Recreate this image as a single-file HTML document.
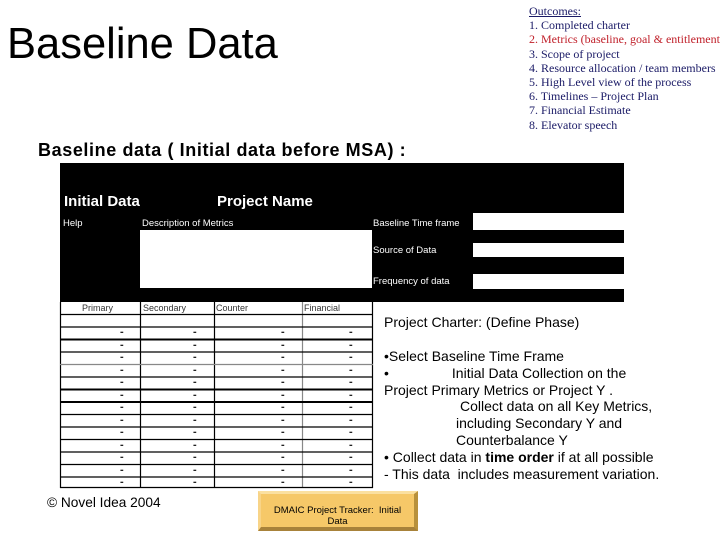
<!DOCTYPE html>
<html><head><style>
*{margin:0;padding:0;box-sizing:border-box}
body{width:720px;height:540px;background:#fff;position:relative;overflow:hidden;font-family:"Liberation Sans",sans-serif}
.a{position:absolute;white-space:nowrap}
.out{font-family:"Liberation Serif",serif;font-size:12px;color:#1a1a66;line-height:14.2px}
.w{position:absolute;background:#fff}
.lbl{position:absolute;color:#fff;font-size:9.5px}
.r{font-size:14px;color:#000;line-height:16.8px}
.d{position:absolute;font-size:9px;color:#333}
.dd{position:absolute;top:326px;font-size:11px;line-height:12.5px;color:#222;font-weight:bold}
</style></head><body>
<div class="a" style="left:7px;top:20px;font-size:43.5px;">Baseline Data</div>
<div class="a out" style="left:529px;top:4px;">
<span style="text-decoration:underline">Outcomes:</span><br>1. Completed charter<br><span style="color:#c0202a">2. Metrics (baseline, goal &amp; entitlement</span><br>3. Scope of project<br>4. Resource allocation / team members<br>5. High Level view of the process<br>6. Timelines – Project Plan<br>7. Financial Estimate<br>8. Elevator speech</div>
<div class="a" style="left:38px;top:140px;font-size:18px;letter-spacing:0.6px;font-weight:bold;">Baseline data ( Initial data before MSA) :</div>

<div style="position:absolute;left:60px;top:163px;width:564px;height:139px;background:#000"></div>
<div class="a" style="left:64px;top:193px;color:#fff;font-weight:bold;font-size:15px">Initial Data</div>
<div class="a" style="left:217px;top:193px;color:#fff;font-weight:bold;font-size:15px">Project Name</div>
<div class="lbl" style="left:63px;top:218px">Help</div>
<div class="lbl" style="left:142px;top:218px">Description of Metrics</div>
<div class="w" style="left:140px;top:230px;width:232px;height:58px"></div>
<div class="lbl" style="left:373px;top:218px">Baseline Time frame</div>
<div class="lbl" style="left:373px;top:245px">Source of Data</div>
<div class="lbl" style="left:373px;top:276px">Frequency of data</div>
<div class="w" style="left:473px;top:213px;width:151px;height:17px"></div>
<div class="w" style="left:473px;top:243px;width:151px;height:14px"></div>
<div class="w" style="left:473px;top:274px;width:151px;height:15px"></div>

<svg style="position:absolute;left:0;top:0" width="720" height="540">
<g stroke="#000" stroke-width="1.2">
<line x1="60.5" y1="302" x2="60.5" y2="488"/>
<line x1="140.5" y1="302" x2="140.5" y2="488"/>
<line x1="214.5" y1="302" x2="214.5" y2="488"/>
<line x1="302.5" y1="302" x2="302.5" y2="488" stroke="#888"/>
<line x1="372.5" y1="302" x2="372.5" y2="488"/>
<line x1="60" y1="314.5" x2="373" y2="314.5"/>
<line x1="60" y1="327" x2="373" y2="327"/>
<line x1="60" y1="339.5" x2="373" y2="339.5" stroke-width="2"/>
<line x1="60" y1="352" x2="373" y2="352"/>
<line x1="60" y1="364.5" x2="373" y2="364.5" stroke="#888"/>
<line x1="60" y1="377" x2="373" y2="377"/>
<line x1="60" y1="389.5" x2="373" y2="389.5" stroke-width="2"/>
<line x1="60" y1="402" x2="373" y2="402" stroke-width="2"/>
<line x1="60" y1="414.5" x2="373" y2="414.5"/>
<line x1="60" y1="427" x2="373" y2="427"/>
<line x1="60" y1="439.5" x2="373" y2="439.5"/>
<line x1="60" y1="452" x2="373" y2="452"/>
<line x1="60" y1="464.5" x2="373" y2="464.5"/>
<line x1="60" y1="477" x2="373" y2="477"/>
<line x1="60" y1="487.5" x2="373" y2="487.5"/>
</g>
</svg>
<div class="d" style="left:82px;top:303px">Primary</div>
<div class="d" style="left:143px;top:303px">Secondary</div>
<div class="d" style="left:216px;top:303px">Counter</div>
<div class="d" style="left:304px;top:303px">Financial</div>
<div class="dd" style="left:120px">-<br>-<br>-<br>-<br>-<br>-<br>-<br>-<br>-<br>-<br>-<br>-<br>-</div>
<div class="dd" style="left:193px">-<br>-<br>-<br>-<br>-<br>-<br>-<br>-<br>-<br>-<br>-<br>-<br>-</div>
<div class="dd" style="left:281px">-<br>-<br>-<br>-<br>-<br>-<br>-<br>-<br>-<br>-<br>-<br>-<br>-</div>
<div class="dd" style="left:349px">-<br>-<br>-<br>-<br>-<br>-<br>-<br>-<br>-<br>-<br>-<br>-<br>-</div>

<div class="a r" style="left:384px;top:314px">Project Charter: (Define Phase)</div>
<div class="a r" style="left:384px;top:348px">•Select Baseline Time Frame<br>•<span style="display:inline-block;width:63px"></span>Initial Data Collection on the<br>Project Primary Metrics or Project Y .<br><span style="display:inline-block;width:76px"></span>Collect data on all Key Metrics,<br><span style="display:inline-block;width:72px"></span>including Secondary Y and<br><span style="display:inline-block;width:72px"></span>Counterbalance Y<br>• Collect data in <b>time order</b> if at all possible<br>- This data &nbsp;includes measurement variation.</div>

<div class="a" style="left:47px;top:495px;font-size:13.7px">© Novel Idea 2004</div>
<div style="position:absolute;left:258px;top:491px;width:160px;height:40px;background:#f6c868;border-top:3px solid #fbe0a0;border-left:3px solid #f8d488;border-right:4px solid #b8913c;border-bottom:4px solid #a8823a;text-align:center;font-size:9.5px;line-height:11px;padding-top:11px;color:#000">DMAIC Project Tracker: &nbsp;Initial<br>Data</div>
</body></html>
